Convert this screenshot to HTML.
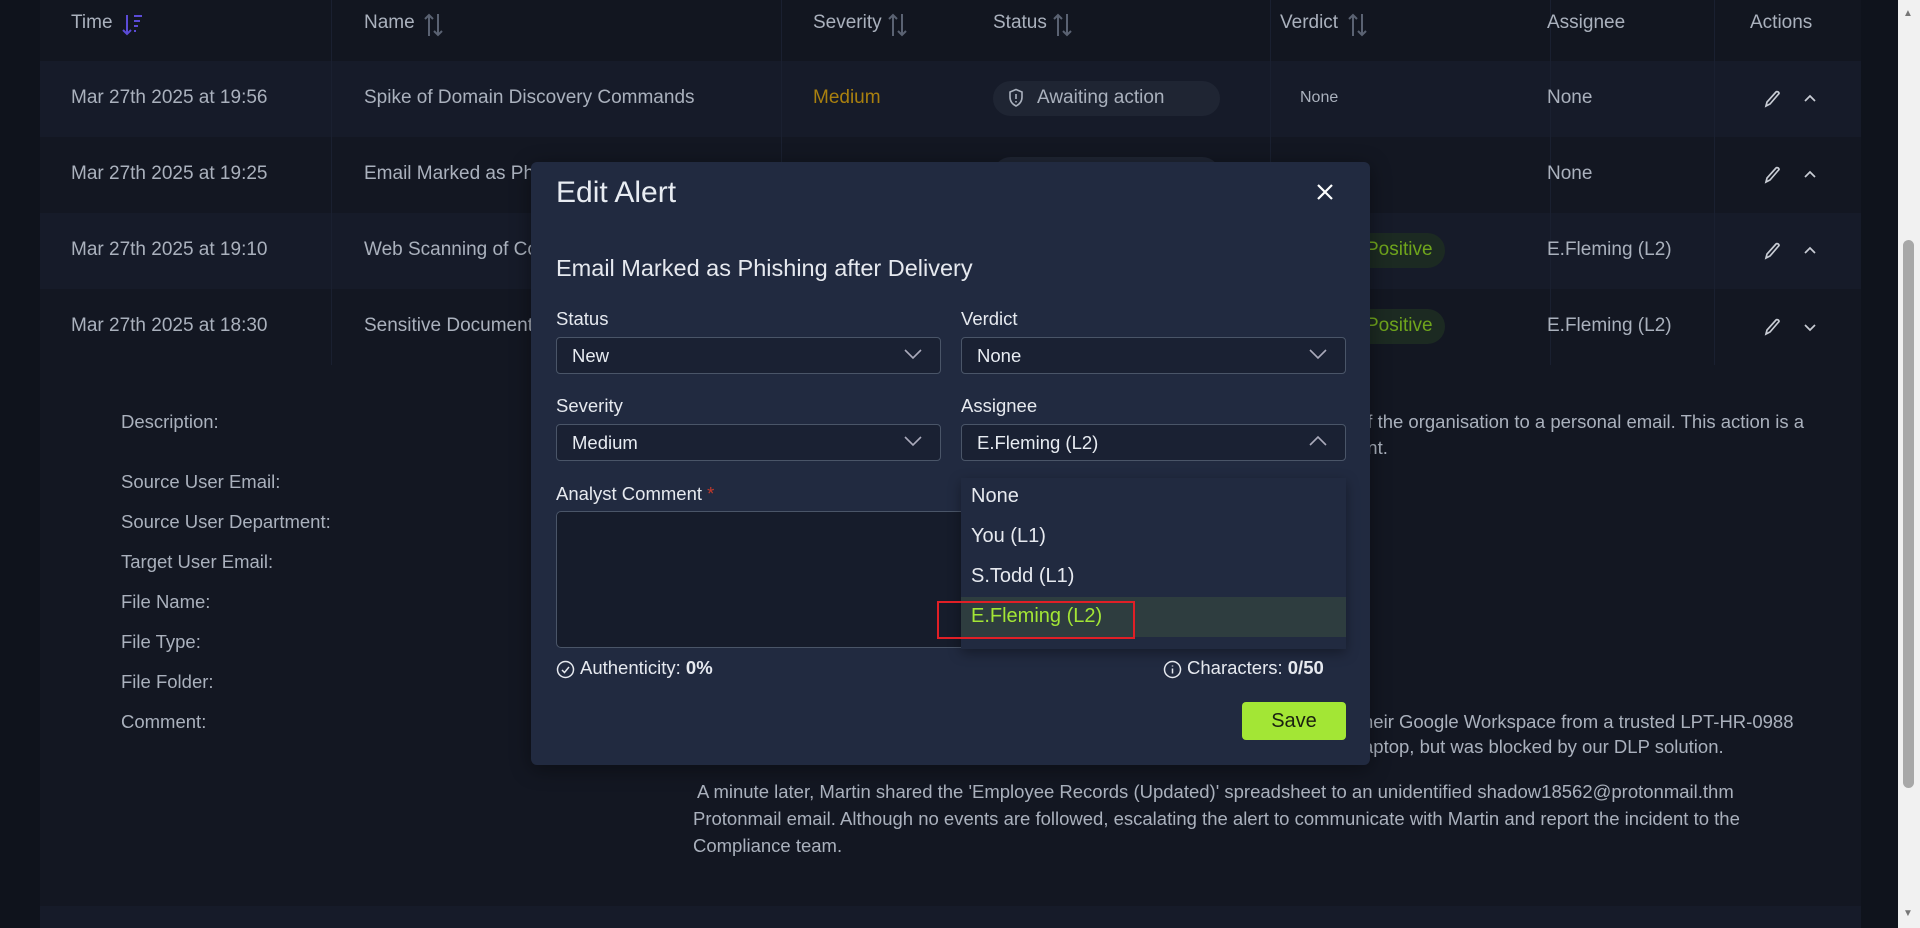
<!DOCTYPE html>
<html><head><meta charset="utf-8"><style>
*{box-sizing:border-box;margin:0;padding:0}
body{width:1920px;height:928px;overflow:hidden;background:#0f131c;font-family:"Liberation Sans",sans-serif;color:#b8bec9;position:relative}
.a{position:absolute;white-space:nowrap}
.main{position:absolute;left:40px;top:0;width:1821px;height:928px;background:#131722}
.row{position:absolute;left:40px;width:1821px}
.t{font-size:19px;color:#aab1bd}
.d{font-size:18.5px;color:#aab1bd}
.vl{position:absolute;width:1px;background:#1a2030}
.sel{position:absolute;height:37px;border:1px solid #4a5568;border-radius:4px;background:#1a2133;color:#e8ecf2;font-size:18.5px;padding:7px 15px}
.lab{font-size:18.5px;color:#e6e9ef}
.chev{position:absolute;right:18px;top:10px}
svg.s{position:absolute}
</style></head><body>
<div class="main"></div>
<div class="row" style="top:0;height:61px;background:#121620"></div>
<div class="row" style="top:61px;height:76px;background:#161b29"></div>
<div class="row" style="top:137px;height:76px;background:#131722"></div>
<div class="row" style="top:213px;height:76px;background:#161b29"></div>
<div class="row" style="top:289px;height:76px;background:#131722"></div>
<div class="row" style="top:906px;height:22px;background:#161b29"></div>
<div class="vl" style="left:331px;top:0;height:365px"></div>
<div class="vl" style="left:781px;top:0;height:365px"></div>
<div class="vl" style="left:1270px;top:0;height:365px"></div>
<div class="vl" style="left:1550px;top:0;height:365px"></div>
<div class="vl" style="left:1714px;top:0;height:365px"></div>

<div class="a t" style="left:71px;top:12px">Time</div>
<svg class="s" style="left:122px;top:13px" width="22" height="24" viewBox="0 0 22 24" fill="none" stroke="#5b4bd6" stroke-width="2"><path d="M5 2v19M1 17l4 4 4-4M12 3h8M12 8h6M12 13h4M12 18h2"/></svg>
<div class="a t" style="left:364px;top:12px">Name</div>
<div class="a t" style="left:813px;top:12px">Severity</div>
<div class="a t" style="left:993px;top:12px">Status</div>
<div class="a t" style="left:1280px;top:12px">Verdict</div>
<svg class="s" style="left:423px;top:12px" width="22" height="26" viewBox="0 0 22 26" fill="none" stroke="#5a6272" stroke-width="2"><path d="M6 24V3M2 7l4-4 4 4M15 2v21M11 19l4 4 4-4"/></svg>
<svg class="s" style="left:887px;top:12px" width="22" height="26" viewBox="0 0 22 26" fill="none" stroke="#5a6272" stroke-width="2"><path d="M6 24V3M2 7l4-4 4 4M15 2v21M11 19l4 4 4-4"/></svg>
<svg class="s" style="left:1052px;top:12px" width="22" height="26" viewBox="0 0 22 26" fill="none" stroke="#5a6272" stroke-width="2"><path d="M6 24V3M2 7l4-4 4 4M15 2v21M11 19l4 4 4-4"/></svg>
<svg class="s" style="left:1347px;top:12px" width="22" height="26" viewBox="0 0 22 26" fill="none" stroke="#5a6272" stroke-width="2"><path d="M6 24V3M2 7l4-4 4 4M15 2v21M11 19l4 4 4-4"/></svg>
<div class="a t" style="left:1547px;top:12px">Assignee</div>
<div class="a t" style="left:1750px;top:12px">Actions</div>

<div class="a t" style="left:71px;top:87px">Mar 27th 2025 at 19:56</div>
<div class="a t" style="left:364px;top:87px">Spike of Domain Discovery Commands</div>
<div class="a t" style="left:813px;top:87px;color:#a9800f">Medium</div>
<div class="a" style="left:993px;top:81px;width:227px;height:35px;border-radius:18px;background:#1f2533"></div>
<svg class="s" style="left:1008px;top:88px" width="16" height="20" viewBox="0 0 16 20" fill="none" stroke="#aab1bd" stroke-width="1.6"><path d="M8 1.5l6 2.5v5c0 4.5-3 7.5-6 9-3-1.5-6-4.5-6-9V4z"/><path d="M8 6v5M8 13v1.5"/></svg>
<div class="a t" style="left:1037px;top:87px">Awaiting action</div>
<div class="a t" style="left:1300px;top:89px;font-size:16px">None</div>
<div class="a t" style="left:1547px;top:87px">None</div>

<div class="a t" style="left:71px;top:163px">Mar 27th 2025 at 19:25</div>
<div class="a t" style="left:364px;top:163px">Email Marked as Phi</div>
<div class="a" style="left:993px;top:157px;width:227px;height:35px;border-radius:18px;background:#1f2533"></div>
<div class="a t" style="left:1547px;top:163px">None</div>

<div class="a t" style="left:71px;top:239px">Mar 27th 2025 at 19:10</div>
<div class="a t" style="left:364px;top:239px">Web Scanning of Co</div>
<div class="a" style="left:1300px;top:233px;width:145px;height:35px;border-radius:18px;background:#1c2a22"></div>
<div class="a t" style="left:1366px;top:239px;color:#6fa51c">Positive</div>
<div class="a t" style="left:1547px;top:239px">E.Fleming (L2)</div>

<div class="a t" style="left:71px;top:315px">Mar 27th 2025 at 18:30</div>
<div class="a t" style="left:364px;top:315px">Sensitive Document</div>
<div class="a" style="left:1300px;top:309px;width:145px;height:35px;border-radius:18px;background:#1c2a22"></div>
<div class="a t" style="left:1366px;top:315px;color:#6fa51c">Positive</div>
<div class="a t" style="left:1547px;top:315px">E.Fleming (L2)</div>

<svg class="s" style="left:1762px;top:89px" width="60" height="20" viewBox="0 0 60 20" fill="none" stroke="#c8ccd4" stroke-width="1.7"><path d="M4 17l1-4 9-10c1-1 3 0 3 1.5L8 15z"/><path d="M43 12l5-5 5 5"/></svg>
<svg class="s" style="left:1762px;top:165px" width="60" height="20" viewBox="0 0 60 20" fill="none" stroke="#c8ccd4" stroke-width="1.7"><path d="M4 17l1-4 9-10c1-1 3 0 3 1.5L8 15z"/><path d="M43 12l5-5 5 5"/></svg>
<svg class="s" style="left:1762px;top:241px" width="60" height="20" viewBox="0 0 60 20" fill="none" stroke="#c8ccd4" stroke-width="1.7"><path d="M4 17l1-4 9-10c1-1 3 0 3 1.5L8 15z"/><path d="M43 12l5-5 5 5"/></svg>
<svg class="s" style="left:1762px;top:317px" width="60" height="20" viewBox="0 0 60 20" fill="none" stroke="#c8ccd4" stroke-width="1.7"><path d="M4 17l1-4 9-10c1-1 3 0 3 1.5L8 15z"/><path d="M43 8l5 5 5-5"/></svg>

<div class="a d" style="left:121px;top:411px">Description:</div>
<div class="a d" style="left:121px;top:471px">Source User Email:</div>
<div class="a d" style="left:121px;top:511px">Source User Department:</div>
<div class="a d" style="left:121px;top:551px">Target User Email:</div>
<div class="a d" style="left:121px;top:591px">File Name:</div>
<div class="a d" style="left:121px;top:631px">File Type:</div>
<div class="a d" style="left:121px;top:671px">File Folder:</div>
<div class="a d" style="left:121px;top:711px">Comment:</div>
<div class="a d" style="left:1357px;top:411px">of the organisation to a personal email. This action is a</div>
<div class="a d" style="left:1357px;top:437px">ent.</div>
<div class="a d" style="left:1363px;top:711px">heir Google Workspace from a trusted LPT-HR-0988</div>
<div class="a d" style="left:1363px;top:736px">aptop, but was blocked by our DLP solution.</div>
<div class="a d" style="left:697px;top:781px">A minute later, Martin shared the 'Employee Records (Updated)' spreadsheet to an unidentified shadow18562@protonmail.thm</div>
<div class="a d" style="left:693px;top:808px">Protonmail email. Although no events are followed, escalating the alert to communicate with Martin and report the incident to the</div>
<div class="a d" style="left:693px;top:835px">Compliance team.</div>

<div class="a" style="left:1898px;top:0;width:22px;height:928px;background:#f1f1f1"></div>
<div class="a" style="left:1903px;top:240px;width:11px;height:548px;background:#a8a8a8;border-radius:6px"></div>
<div class="a" style="left:1903px;top:8px;font-size:10px;color:#777">▲</div>
<div class="a" style="left:1903px;top:908px;font-size:10px;color:#777">▼</div>

<div class="a" style="left:531px;top:162px;width:839px;height:603px;background:#212a40;border-radius:6px;box-shadow:0 4px 20px rgba(0,0,0,.4)"></div>
<div class="a" style="left:556px;top:176px;font-size:30px;color:#e8ecf2;font-weight:300">Edit Alert</div>
<svg class="s" style="left:1316px;top:183px" width="18" height="18" viewBox="0 0 18 18" stroke="#fff" stroke-width="2.2"><path d="M2 2l14 14M16 2L2 16"/></svg>
<div class="a" style="left:556px;top:255px;font-size:23.5px;color:#e6e9ef">Email Marked as Phishing after Delivery</div>
<div class="a lab" style="left:556px;top:308px">Status</div>
<div class="a lab" style="left:961px;top:308px">Verdict</div>
<div class="sel" style="left:556px;top:337px;width:385px">New<svg class="chev" width="18" height="12" viewBox="0 0 18 12" fill="none" stroke="#aab" stroke-width="1.6"><path d="M1 2l8 8 8-8"/></svg></div>
<div class="sel" style="left:961px;top:337px;width:385px">None<svg class="chev" width="18" height="12" viewBox="0 0 18 12" fill="none" stroke="#aab" stroke-width="1.6"><path d="M1 2l8 8 8-8"/></svg></div>
<div class="a lab" style="left:556px;top:395px">Severity</div>
<div class="a lab" style="left:961px;top:395px">Assignee</div>
<div class="sel" style="left:556px;top:424px;width:385px">Medium<svg class="chev" width="18" height="12" viewBox="0 0 18 12" fill="none" stroke="#aab" stroke-width="1.6"><path d="M1 2l8 8 8-8"/></svg></div>
<div class="sel" style="left:961px;top:424px;width:385px">E.Fleming (L2)<svg class="chev" width="18" height="12" viewBox="0 0 18 12" fill="none" stroke="#aab" stroke-width="1.6"><path d="M1 10l8-8 8 8"/></svg></div>
<div class="a lab" style="left:556px;top:483px">Analyst Comment <span style="color:#c0392b">*</span></div>
<div class="a" style="left:556px;top:511px;width:420px;height:137px;border:1px solid #4a5568;border-radius:5px;background:#161c2b"></div>
<div class="a" style="left:961px;top:478px;width:385px;height:171px;background:#212a40;box-shadow:0 4px 12px rgba(0,0,0,.35)"></div>
<div class="a" style="left:961px;top:597px;width:385px;height:40px;background:#2e3d3f"></div>
<div class="a lab" style="left:971px;top:485px;font-size:20px">None</div>
<div class="a lab" style="left:971px;top:525px;font-size:20px">You (L1)</div>
<div class="a lab" style="left:971px;top:565px;font-size:20px">S.Todd (L1)</div>
<div class="a lab" style="left:971px;top:605px;font-size:20px;color:#a3e635">E.Fleming (L2)</div>
<div class="a" style="left:937px;top:601px;width:198px;height:38px;border:2px solid #e01f26"></div>
<svg class="s" style="left:556px;top:660px" width="19" height="19" viewBox="0 0 19 19" fill="none" stroke="#e6e9ef" stroke-width="1.5"><circle cx="9.5" cy="9.5" r="8"/><path d="M6 10l2.5 2.5L13 7"/></svg>
<div class="a lab" style="left:580px;top:657px">Authenticity: <b>0%</b></div>
<svg class="s" style="left:1163px;top:660px" width="19" height="19" viewBox="0 0 19 19" fill="none" stroke="#e6e9ef" stroke-width="1.5"><circle cx="9.5" cy="9.5" r="8"/><path d="M9.5 8.5v5M9.5 5.5v1"/></svg>
<div class="a lab" style="left:1187px;top:657px">Characters: <b>0/50</b></div>
<div class="a" style="left:1242px;top:702px;width:104px;height:38px;background:#a3e635;border-radius:4px;color:#1a2010;font-size:20px;text-align:center;line-height:38px">Save</div>
</body></html>
